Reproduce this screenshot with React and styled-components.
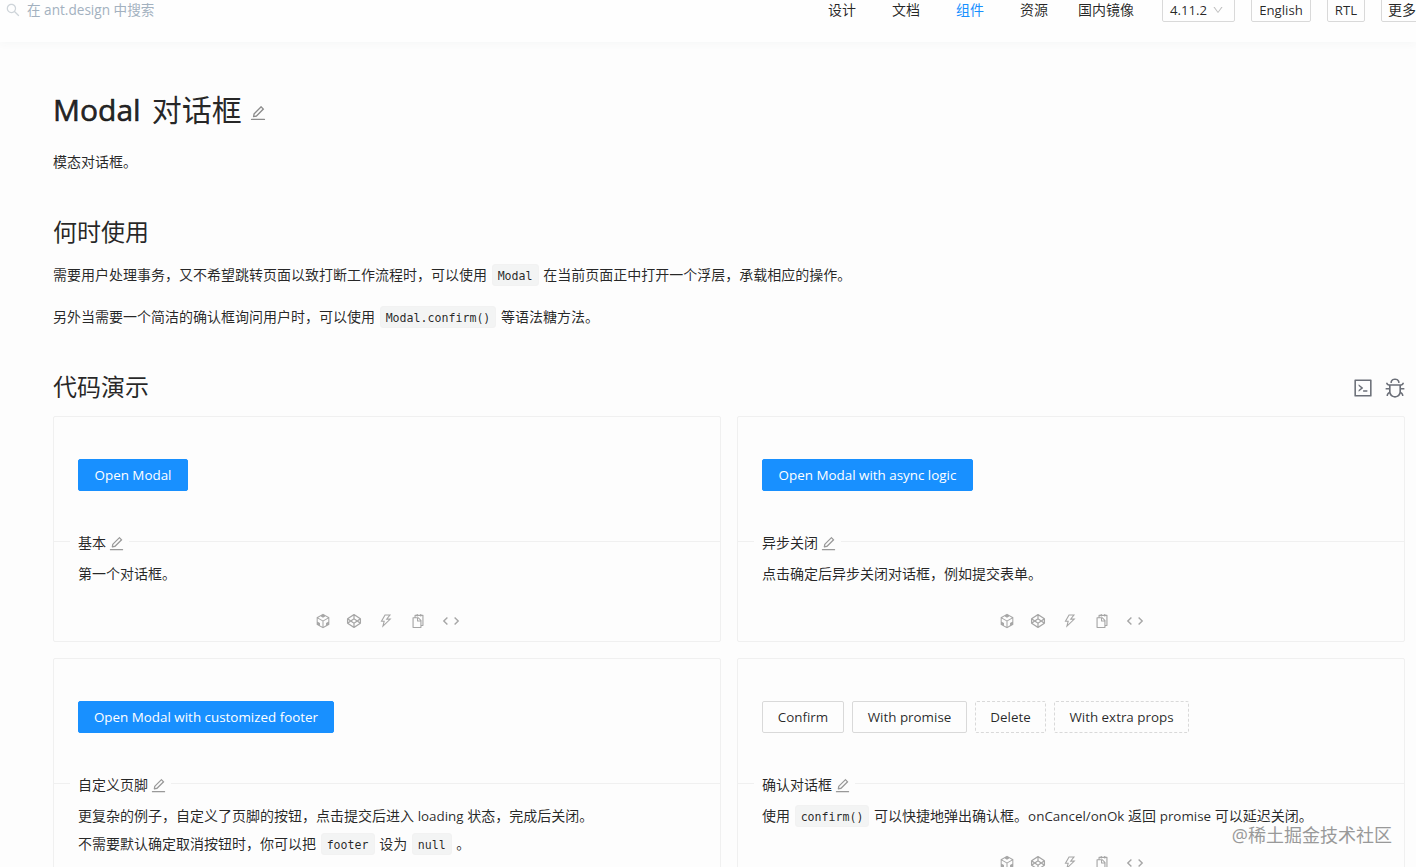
import React from 'react';
import styled, { createGlobalStyle, css } from 'styled-components';
import {
  AiOutlineBug,
  AiOutlineCode,
  AiOutlineCodeSandbox,
  AiOutlineCodepen,
  AiOutlineDown,
  AiOutlineEdit,
  AiOutlineSearch,
  AiOutlineSnippets,
  AiOutlineThunderbolt,
} from 'react-icons/ai';

const GlobalStyle = createGlobalStyle`
  * { box-sizing: border-box; }
  body {
    margin: 0;
    background: #fdfdfd;
    color: rgba(0, 0, 0, 0.85);
    font: 14px/22px "Open Sans", "Noto Sans CJK SC", sans-serif;
  }
`;

const Page = styled.div`
  position: relative;
  height: 867px;
  overflow: hidden;
`;

const Header = styled.header`
  display: flex;
  justify-content: space-between;
  height: 42px;
  background: #fefefe;
  box-shadow: 0 2px 8px #f6f7f7;
`;

const SearchBox = styled.div`
  display: flex;
  align-items: center;
  gap: 6px;
  height: 22px;
  margin: -1px 0 0 5px;
  color: #a3b1bf;
  font-size: 13.6px;
  white-space: nowrap;
  svg { color: #ced4d9; font-size: 16px; }
`;

const Nav = styled.nav`
  display: flex;
  width: 588px;
  height: 24px;
  margin-top: -2px;
  line-height: 24px;
  white-space: nowrap;
  overflow: hidden;
`;

const NavItem = styled.a`
  flex: none;
  margin-right: ${(p) => p.$gap}px;
  color: ${(p) => (p.$active ? '#1890ff' : 'rgba(0, 0, 0, 0.85)')};
`;

const NavBox = styled.div`
  display: flex;
  flex: none;
  align-items: center;
  justify-content: ${(p) => (p.$start ? 'flex-start' : 'center')};
  gap: 5px;
  width: ${(p) => p.$width}px;
  height: 24px;
  margin-right: 16px;
  padding: 0 ${(p) => (p.$size ? 6 : 7)}px;
  border: 1px solid #d9d9d9;
  border-radius: 2px;
  font-size: ${(p) => p.$size || 13.2}px;
  svg { color: #bfbfbf; font-size: 12px; }
`;

const Main = styled.main`
  padding: 45px 11px 0 53px;
`;

const Title = styled.h1`
  display: flex;
  align-items: center;
  height: 46px;
  margin: 0;
  font-size: 30px;
  font-weight: 400;
  span {
    margin-right: 11px;
    -webkit-text-stroke: 0.6px currentColor;
  }
  svg { margin: 6px 0 0 7px; color: #8c8c8c; font-size: 18px; }
`;

const Paragraph = styled.p`
  height: 28px;
  margin: ${(p) => p.$top}px 0 0;
  line-height: 28px;
  white-space: nowrap;
`;

const Heading = styled.h2`
  height: 32px;
  margin: ${(p) => p.$top || 0}px 0 0;
  font-size: 24px;
  font-weight: 400;
  line-height: 32px;
`;

const DemoHeader = styled.div`
  display: flex;
  justify-content: space-between;
  align-items: center;
  margin: 40px -1px 0 0;
`;

const DemoTools = styled.div`
  display: flex;
  gap: 10px;
  margin-top: 2px;
  color: #6b6f78;
  font-size: 22px;
  svg { display: block; }
`;

const Code = styled.code`
  display: inline-block;
  height: 22px;
  margin: -1px 1px 1px;
  padding: 0 5px;
  border: 1px solid #f2f2f2;
  border-radius: 3px;
  background: #f3f4f4;
  font: 11.6px/22px "DejaVu Sans Mono", monospace;
  vertical-align: middle;
`;

const Grid = styled.div`
  display: grid;
  grid-template-columns: 1fr 1fr;
  gap: 16px;
  margin-top: 13px;
`;

const Card = styled.section`
  display: flex;
  flex-direction: column;
  height: ${(p) => p.$height}px;
  border: 1px solid #f0f0f0;
  border-radius: 2px;
`;

const Actions = styled.div`
  display: flex;
  gap: 8px;
  height: 115px;
  padding: 42px 24px 0;
`;

const Button = styled.button`
  width: ${(p) => p.$width}px;
  height: 32px;
  padding: 0;
  border: 1px ${(p) => (p.$kind === 'dashed' ? 'dashed' : 'solid')} #d9d9d9;
  border-radius: 2px;
  background: transparent;
  color: rgba(0, 0, 0, 0.85);
  font: inherit;
  font-size: 13.4px;
  white-space: nowrap;
  ${(p) =>
    p.$kind === 'primary' &&
    css`
      border-color: #1890ff;
      background: #1890ff;
      color: #fff;
    `}
`;

const CardTitle = styled.div`
  display: flex;
  align-items: center;
  height: 22px;
  white-space: nowrap;
  &::before, &::after {
    content: '';
    height: 1px;
    background: #f0f0f0;
    margin-top: -4px;
  }
  &::before { width: 16px; margin-right: 8px; }
  &::after { flex: 1; margin-left: 4px; }
  svg { margin-left: 2px; color: #999; font-size: 17px; }
`;

const Description = styled.div`
  height: ${(p) => p.$lines * 28}px;
  padding: 0 24px;
  margin-top: 6px;
  line-height: 28px;
  white-space: nowrap;
`;

const Latin = styled.span`
  font-size: 13.4px;
`;

const IconBar = styled.div`
  display: flex;
  justify-content: center;
  align-items: center;
  gap: 14px;
  height: 18px;
  margin-top: 24px;
  color: #a6a6a6;
  font-size: 18px;
  svg { flex: none; }
  svg:nth-child(2) { margin-left: -1px; }
  svg:nth-child(3), svg:nth-child(4) { width: 16px; height: 16px; margin: 0 1px; }
  svg:last-child { margin-left: 1px; }
`;

const Watermark = styled.div`
  position: absolute;
  right: 24px;
  bottom: 18px;
  color: #999;
  font-size: 18px;
  line-height: 28px;
  white-space: nowrap;
`;

const ExpandIcon = () => (
  <svg width="18" height="16" viewBox="0 0 18 16" fill="none" stroke="currentColor" strokeWidth="1.4">
    <path d="M5.4 4.5 1.8 8l3.6 3.5M12.6 4.5 16.2 8l-3.6 3.5" />
  </svg>
);

function Demo({ height, title, actions, lines, children }) {
  return (
    <Card $height={height}>
      <Actions>
        {actions.map(([label, width, kind]) => (
          <Button key={label} $width={width} $kind={kind}>{label}</Button>
        ))}
      </Actions>
      <CardTitle>{title}<AiOutlineEdit /></CardTitle>
      <Description $lines={lines}>{children}</Description>
      <IconBar>
        <AiOutlineCodeSandbox />
        <AiOutlineCodepen />
        <AiOutlineThunderbolt />
        <AiOutlineSnippets />
        <ExpandIcon />
      </IconBar>
    </Card>
  );
}

export default function App() {
  return (
    <Page lang="zh-CN">
      <GlobalStyle />
      <Header>
        <SearchBox><AiOutlineSearch />在 ant.design 中搜索</SearchBox>
        <Nav>
          <NavItem $gap={36}>设计</NavItem>
          <NavItem $gap={36}>文档</NavItem>
          <NavItem $gap={36} $active>组件</NavItem>
          <NavItem $gap={30}>资源</NavItem>
          <NavItem $gap={28}>国内镜像</NavItem>
          <NavBox $width={73} $start>4.11.2<AiOutlineDown /></NavBox>
          <NavBox $width={60}>English</NavBox>
          <NavBox $width={38}>RTL</NavBox>
          <NavBox $width={60} $start $size={14}>更多</NavBox>
        </Nav>
      </Header>
      <Main>
        <Title><span>Modal</span>对话框<AiOutlineEdit /></Title>
        <Paragraph $top={15}>模态对话框。</Paragraph>
        <Heading $top={40}>何时使用</Heading>
        <Paragraph $top={13}>
          需要用户处理事务，又不希望跳转页面以致打断工作流程时，可以使用 <Code>Modal</Code> 在当前页面正中打开一个浮层，承载相应的操作。
        </Paragraph>
        <Paragraph $top={14}>
          另外当需要一个简洁的确认框询问用户时，可以使用 <Code>Modal.confirm()</Code> 等语法糖方法。
        </Paragraph>
        <DemoHeader>
          <Heading>代码演示</Heading>
          <DemoTools><AiOutlineCode /><AiOutlineBug /></DemoTools>
        </DemoHeader>
        <Grid>
          <Demo height={226} title="基本" lines={1} actions={[['Open Modal', 110, 'primary']]}>
            第一个对话框。
          </Demo>
          <Demo height={226} title="异步关闭" lines={1} actions={[['Open Modal with async logic', 211, 'primary']]}>
            点击确定后异步关闭对话框，例如提交表单。
          </Demo>
          <Demo height={254} title="自定义页脚" lines={2} actions={[['Open Modal with customized footer', 256, 'primary']]}>
            更复杂的例子，自定义了页脚的按钮，点击提交后进入 <Latin>loading</Latin> 状态，完成后关闭。
            <br />
            不需要默认确定取消按钮时，你可以把 <Code>footer</Code> 设为 <Code>null</Code> 。
          </Demo>
          <Demo
            height={254}
            title="确认对话框"
            lines={1}
            actions={[
              ['Confirm', 82],
              ['With promise', 115],
              ['Delete', 71, 'dashed'],
              ['With extra props', 135, 'dashed'],
            ]}
          >
            使用 <Code>confirm()</Code> 可以快捷地弹出确认框。<Latin>onCancel/onOk</Latin> 返回 <Latin>promise</Latin> 可以延迟关闭。
          </Demo>
        </Grid>
      </Main>
      <Watermark>@稀土掘金技术社区</Watermark>
    </Page>
  );
}
